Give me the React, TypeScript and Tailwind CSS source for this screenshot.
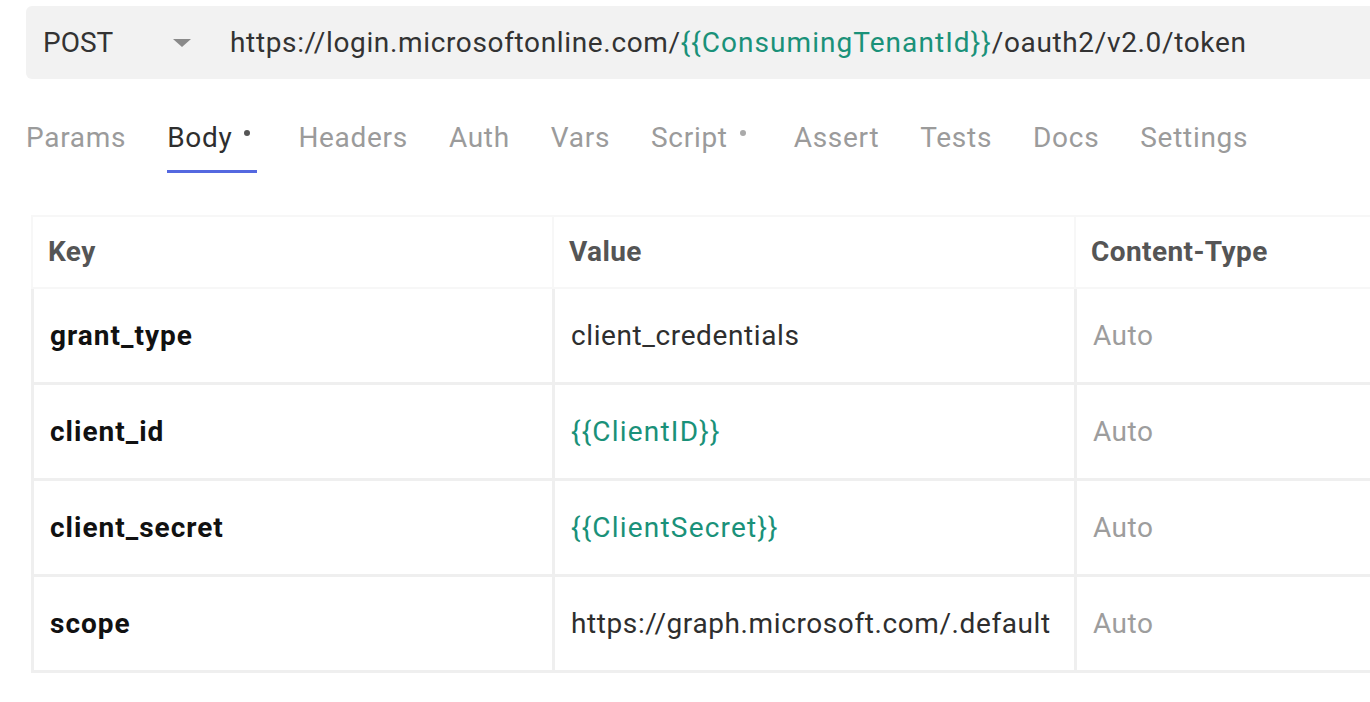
import React from 'react';

const tabs = [
  { name: 'Params' },
  { name: 'Body', dot: true, active: true },
  { name: 'Headers' },
  { name: 'Auth' },
  { name: 'Vars' },
  { name: 'Script', dot: true },
  { name: 'Assert' },
  { name: 'Tests' },
  { name: 'Docs' },
  { name: 'Settings' },
];

const rows = [
  { key: 'grant_type', value: 'client_credentials' },
  { key: 'client_id', value: '{{ClientID}}', variable: true },
  { key: 'client_secret', value: '{{ClientSecret}}', variable: true },
  { key: 'scope', value: 'https://graph.microsoft.com/.default' },
];

export default function App() {
  return (
    <div className="min-h-[702px] w-[1370px] overflow-hidden bg-white pl-[26px] pt-[6px] font-['Roboto',sans-serif]">
      {/* url bar */}
      <div className="flex h-[73px] items-center rounded-l-md bg-[#f2f2f2] pl-[17px] text-[28px] text-[#333]">
        <span className="w-[130px]">POST</span>
        <svg width="18" height="9" viewBox="0 0 18 9" className="mt-[1px]">
          <path d="M0 0 L18 0 L9 8 Z" fill="#8a8a8a" />
        </svg>
        <span className="ml-[39px] whitespace-nowrap tracking-[0.65px]">
          https://login.microsoftonline.com/
          <span className="tracking-[1.05px] text-[#1a9179]">{'{{ConsumingTenantId}}'}</span>
          /oauth2/v2.0/token
        </span>
      </div>

      {/* tabs */}
      <div className="mt-[38px] flex gap-[41px] text-[28px] leading-[42px] tracking-[0.7px]">
        {tabs.map((t) => (
          <div key={t.name} className="relative flex items-start">
            <span className={t.active ? 'text-[#2e2e2e]' : 'text-[#9b9b9b]'}>{t.name}</span>
            {t.dot && <span className={'ml-[12px] mr-[7px] mt-[13px] h-[6px] w-[6px] rounded-full ' + (t.active ? 'bg-[#555]' : 'bg-[#aaa]')} />}
            {t.active && <div className="absolute bottom-[-14px] left-0 right-0 h-[3px] bg-[#5468e0]" />}
          </div>
        ))}
      </div>

      {/* table */}
      <div className="ml-[5px] mt-[56px] w-[1400px]">
        <div className="grid grid-cols-[521px_522px_1fr] border-[2px] border-[#f7f7f7] text-[28px] font-bold tracking-[0.4px] text-[#555]">
          <div className="flex h-[70px] items-center border-r-[2px] border-[#f7f7f7] pl-[15px]">Key</div>
          <div className="flex h-[70px] items-center border-r-[2px] border-[#f7f7f7] pl-[15px]">Value</div>
          <div className="flex h-[70px] items-center pl-[15px]">Content-Type</div>
        </div>
        {rows.map((r) => (
          <div key={r.key} className="grid grid-cols-[521px_522px_1fr] border-x-[3px] border-b-[3px] border-[#efefef] text-[28px]">
            <div className="flex h-[93px] items-center border-r-[3px] border-[#efefef] pl-[16px] font-bold tracking-[1px] text-[#111]">{r.key}</div>
            <div
              className={
                'flex h-[93px] items-center border-r-[3px] border-[#efefef] pl-[16px] ' +
                (r.variable ? 'tracking-[1.2px] text-[#1a9179]' : 'tracking-[0.6px] text-[#2e2e2e]')
              }
            >
              {r.value}
            </div>
            <div className="flex h-[93px] items-center pl-[16px] tracking-[0.5px] text-[#9d9d9d]">Auto</div>
          </div>
        ))}
      </div>
    </div>
  );
}
